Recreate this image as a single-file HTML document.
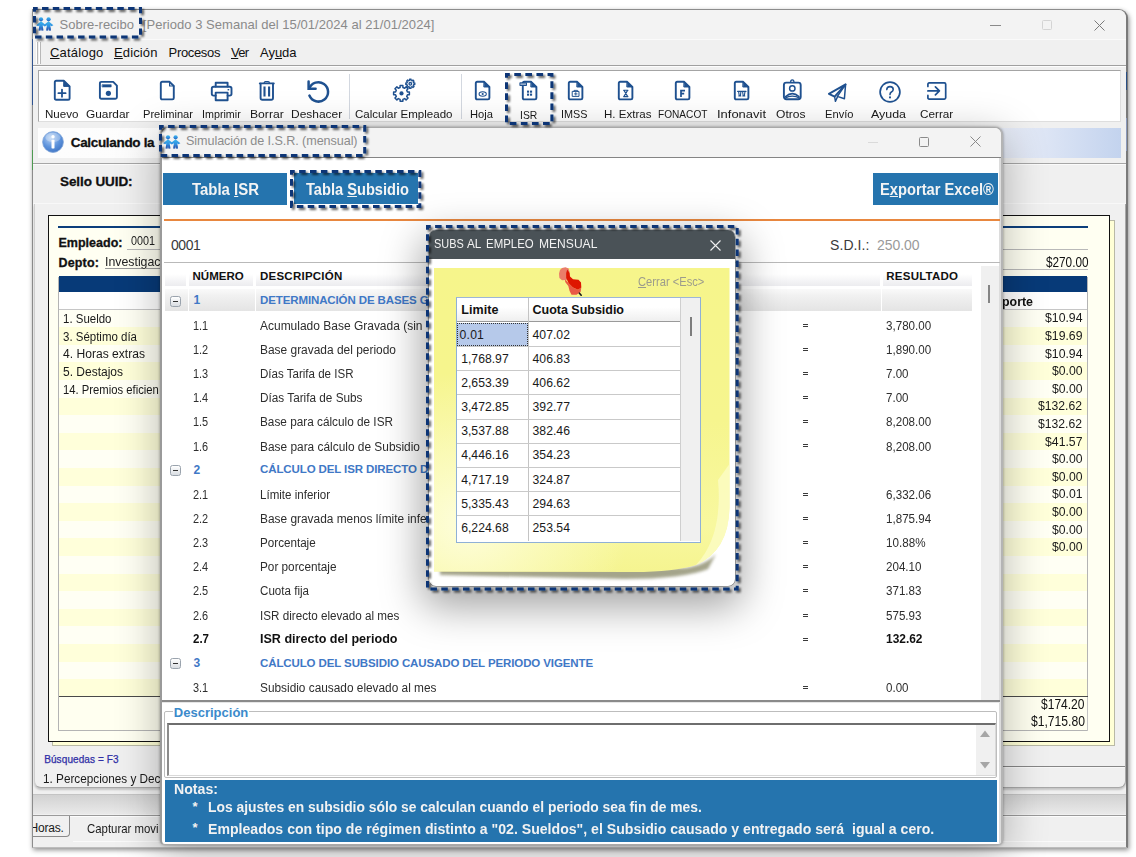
<!DOCTYPE html>
<html><head><meta charset="utf-8"><title>Sobre-recibo</title>
<style>
*{box-sizing:border-box;margin:0;padding:0}
html,body{width:1136px;height:857px;overflow:hidden;background:#fff;font-family:"Liberation Sans",sans-serif}
.a{position:absolute}
.t{position:absolute;white-space:pre}
u{text-decoration:underline;text-underline-offset:1px}
.dash{position:absolute;border:3px dashed #0b3878;filter:drop-shadow(2px 2px 1.5px rgba(0,0,0,.5))}
svg{position:absolute;overflow:visible}
</style></head><body>
<div class="a" style="left:32px;top:9px;width:1096px;height:839px;background:#f0f0f0;border:1px solid #8c8c8c;border-bottom-color:#bdbdbd;border-right:2px solid #7a7a7a;border-radius:0 9px 0 0;box-shadow:1px 2px 5px rgba(0,0,0,.45);overflow:hidden"></div>
<div class="a" style="left:33px;top:10px;width:1093px;height:30px;background:#f3f3f3;border-radius:0 8px 0 0;"></div>
<div class="a" style="left:33px;top:39px;width:1093px;height:1px;background:#fafafa;"></div>
<svg style="left:36.3px;top:17.2px" width="18" height="14" viewBox="0 0 18 14"><defs><linearGradient id="pg" x1="0" y1="0" x2="0" y2="1"><stop offset="0" stop-color="#3db6ec"/><stop offset=".55" stop-color="#2f8fe0"/><stop offset="1" stop-color="#2a5db4"/></linearGradient></defs><g fill="url(#pg)"><circle cx="5" cy="2.3" r="2.1"/><circle cx="12.6" cy="2.3" r="2.1"/><path d="M5 4.2 L0.2 8.2 L2.2 9.2 L3.3 8.3 L2.6 13.6 L4.6 13.6 L5 10.2 L5.4 13.6 L7.4 13.6 L6.7 8.3 L8.8 9.6 L10.9 8.3 L10.2 13.6 L12.2 13.6 L12.6 10.2 L13 13.6 L15 13.6 L14.3 8.3 L15.4 9.2 L17.4 8.2 L12.6 4.2 L8.8 7.2 Z"/></g><g fill="#2a5db4" opacity=".55"><path d="M2.6 13.6 L3 10.5 L7 10.5 L7.4 13.6 L5.4 13.6 L5 11.2 L4.6 13.6Z"/><path d="M10.2 13.6 L10.6 10.5 L14.6 10.5 L15 13.6 L13 13.6 L12.6 11.2 L12.2 13.6Z"/></g></svg>
<div class="t" style="left:59.50px;top:18.04px;font-size:13px;line-height:14.95px;color:#8a8a8a;letter-spacing:0.005px;">Sobre-recibo</div>
<div class="t" style="left:142.80px;top:18.04px;font-size:13px;line-height:14.95px;color:#8a8a8a;letter-spacing:0.035px;">[Periodo 3 Semanal del 15/01/2024 al 21/01/2024]</div>
<div class="a" style="left:990px;top:25px;width:11px;height:1px;background:#8a8a8a;"></div>
<div class="a" style="left:1042px;top:19.5px;width:10px;height:10px;border:1px solid #d4d4d4;border-radius:1.5px;"></div>
<svg style="left:1094px;top:19.5px" width="11" height="11" viewBox="0 0 11 11"><path d="M0.5 0.5 L10.5 10.5 M10.5 0.5 L0.5 10.5" stroke="#7a7a7a" stroke-width="1" fill="none"/></svg>
<div class="a" style="left:33px;top:40px;width:1093px;height:25px;background:#f0f0f0;"></div>
<div class="a" style="left:36px;top:42px;width:1px;height:22px;background:#fff;"></div>
<div class="a" style="left:37px;top:42px;width:1px;height:22px;background:#b8b8b8;"></div>
<div class="a" style="left:39px;top:42px;width:1px;height:22px;background:#fff;"></div>
<div class="a" style="left:40px;top:42px;width:1px;height:22px;background:#b8b8b8;"></div>
<div class="t" style="left:50.00px;top:46.04px;font-size:13px;line-height:14.95px;color:#111;letter-spacing:0.182px;"><u>C</u>atálogo</div>
<div class="t" style="left:114.00px;top:46.04px;font-size:13px;line-height:14.95px;color:#111;letter-spacing:0.123px;"><u>E</u>dición</div>
<div class="t" style="left:168.60px;top:46.04px;font-size:13px;line-height:14.95px;color:#111;letter-spacing:-0.338px;">Procesos</div>
<div class="t" style="left:231.00px;top:46.04px;font-size:13px;line-height:14.95px;color:#111;letter-spacing:-0.672px;"><u>V</u>er</div>
<div class="t" style="left:260.00px;top:46.04px;font-size:13px;line-height:14.95px;color:#111;letter-spacing:-0.028px;">Ay<u>u</u>da</div>
<div class="a" style="left:33px;top:65px;width:1093px;height:1px;background:#a0a0a0;"></div>
<div class="a" style="left:33px;top:66px;width:1093px;height:1px;background:#fdfdfd;"></div>
<div class="a" style="left:38px;top:70px;width:1083px;height:52px;background:#fff;border:1px solid #dedede;border-top-color:#a4a4a4;border-left-color:#a8a8a8;"></div>
<div class="a" style="left:349px;top:74px;width:1px;height:45px;background:#d3d8e0;"></div>
<div class="a" style="left:460.5px;top:74px;width:1px;height:45px;background:#d3d8e0;"></div>
<div class="t" style="left:44.50px;top:107.33px;font-size:11.6px;line-height:13.34px;color:#1a1a1a;transform:scaleX(0.9995);transform-origin:0 0;">Nuevo</div>
<div class="t" style="left:86.00px;top:107.33px;font-size:11.6px;line-height:13.34px;color:#1a1a1a;transform:scaleX(1.0228);transform-origin:0 0;">Guardar</div>
<div class="t" style="left:142.50px;top:107.33px;font-size:11.6px;line-height:13.34px;color:#1a1a1a;transform:scaleX(0.9581);transform-origin:0 0;">Preliminar</div>
<div class="t" style="left:202.00px;top:107.33px;font-size:11.6px;line-height:13.34px;color:#1a1a1a;transform:scaleX(0.9257);transform-origin:0 0;">Imprimir</div>
<div class="t" style="left:250.00px;top:107.33px;font-size:11.6px;line-height:13.34px;color:#1a1a1a;transform:scaleX(1.0475);transform-origin:0 0;">Borrar</div>
<div class="t" style="left:290.75px;top:107.33px;font-size:11.6px;line-height:13.34px;color:#1a1a1a;transform:scaleX(1.0327);transform-origin:0 0;">Deshacer</div>
<div class="t" style="left:355.00px;top:107.33px;font-size:11.6px;line-height:13.34px;color:#1a1a1a;transform:scaleX(0.9954);transform-origin:0 0;">Calcular Empleado</div>
<div class="t" style="left:470.00px;top:107.33px;font-size:11.6px;line-height:13.34px;color:#1a1a1a;transform:scaleX(0.9640);transform-origin:0 0;">Hoja</div>
<div class="t" style="left:519.70px;top:108.33px;font-size:11.6px;line-height:13.34px;color:#1a1a1a;transform:scaleX(0.8951);transform-origin:0 0;">ISR</div>
<div class="t" style="left:561.00px;top:107.33px;font-size:11.6px;line-height:13.34px;color:#1a1a1a;transform:scaleX(0.9344);transform-origin:0 0;">IMSS</div>
<div class="t" style="left:603.75px;top:107.33px;font-size:11.6px;line-height:13.34px;color:#1a1a1a;transform:scaleX(0.9964);transform-origin:0 0;">H. Extras</div>
<div class="t" style="left:658.00px;top:107.33px;font-size:11.6px;line-height:13.34px;color:#1a1a1a;transform:scaleX(0.8732);transform-origin:0 0;">FONACOT</div>
<div class="t" style="left:716.75px;top:107.33px;font-size:11.6px;line-height:13.34px;color:#1a1a1a;transform:scaleX(1.1180);transform-origin:0 0;">Infonavit</div>
<div class="t" style="left:776.00px;top:107.33px;font-size:11.6px;line-height:13.34px;color:#1a1a1a;transform:scaleX(1.0402);transform-origin:0 0;">Otros</div>
<div class="t" style="left:824.50px;top:107.33px;font-size:11.6px;line-height:13.34px;color:#1a1a1a;transform:scaleX(0.9610);transform-origin:0 0;">Envío</div>
<div class="t" style="left:870.75px;top:107.33px;font-size:11.6px;line-height:13.34px;color:#1a1a1a;transform:scaleX(1.0713);transform-origin:0 0;">Ayuda</div>
<div class="t" style="left:919.50px;top:107.33px;font-size:11.6px;line-height:13.34px;color:#1a1a1a;transform:scaleX(1.0119);transform-origin:0 0;">Cerrar</div>
<svg style="left:53.5px;top:79.8px" width="16.4" height="20.6" viewBox="0 0 16.4 20.6" fill="none" stroke="#1f5190" stroke-width="1.9" stroke-linejoin="round" stroke-linecap="round"><path d="M2.2 .8 H9.999999999999998 L15.599999999999998 6.3999999999999995 V18.400000000000002 Q15.599999999999998 19.8 14.2 19.8 H2.2 Q.8 19.8 .8 18.400000000000002 V2.2 Q.8 .8 2.2 .8Z"/><path d="M9.999999999999998 .8 L15.599999999999998 6.3999999999999995 H9.999999999999998Z" fill="#1f5190" stroke-width="1"/><path d="M8 9.6 V16.8 M4.4 13.2 H11.6" stroke-width="1.8"/></svg>
<svg style="left:99px;top:81.2px" width="18.8" height="18.6" viewBox="0 0 18.8 18.6" fill="none" stroke="#1f5190" stroke-width="1.9" stroke-linejoin="round" stroke-linecap="round"><path d="M2.4 .9 H14.2 L17.9 4.6 V16.2 Q17.9 17.7 16.4 17.7 H2.4 Q.9 17.7 .9 16.2 V2.4 Q.9 .9 2.4 .9Z"/><rect x="3.4" y="3.7" width="8.8" height="2.3" fill="#1f5190" stroke-width=".6"/><circle cx="9.4" cy="12.3" r="2.6" fill="#1f5190" stroke="none"/></svg>
<svg style="left:160px;top:81.3px" width="14.6" height="19.2" viewBox="0 0 14.6 19.2" fill="none" stroke="#1f5190" stroke-width="1.9" stroke-linejoin="round" stroke-linecap="round"><path d="M2.2 .8 H9.6 L13.8 5 V17 Q13.8 18.4 12.4 18.4 H2.2 Q.8 18.4 .8 17 V2.2 Q.8 .8 2.2 .8Z"/><path d="M9.6 .8 V5 H13.8" stroke-width="1.2"/></svg>
<svg style="left:210.6px;top:82px" width="21.3" height="19" viewBox="0 0 21.3 19" fill="none" stroke="#1f5190" stroke-width="1.9" stroke-linejoin="round" stroke-linecap="round"><path d="M4.7 4.6 V.8 H16.6 V4.6" /><path d="M4.7 13.6 H2.6 Q.8 13.6 .8 11.8 V6.6 Q.8 4.8 2.6 4.8 H18.7 Q20.5 4.8 20.5 6.6 V11.8 Q20.5 13.6 18.7 13.6 H16.6"/><path d="M4.7 10.6 H16.6 V18.2 H4.7Z"/><rect x="16.6" y="7" width="1.6" height="1.4" fill="#1f5190" stroke="none"/></svg>
<svg style="left:259.4px;top:80.6px" width="15.6" height="19.6" viewBox="0 0 15.6 19.6" fill="none" stroke="#1f5190" stroke-width="1.9" stroke-linejoin="round" stroke-linecap="round"><path d="M.8 2.4 H14.8"/><path d="M5.2 2.2 Q5.2 .7 6.4 .7 H9.2 Q10.4 .7 10.4 2.2" stroke-width="1.3"/><path d="M1.6 2.6 V17 Q1.6 18.8 3.4 18.8 H12.2 Q14 18.8 14 17 V2.6"/><path d="M5.5 5.6 V15.4 M10.1 5.6 V15.4" stroke-width="2.1" stroke-linecap="butt"/></svg>
<svg style="left:306px;top:79px" width="24" height="24" viewBox="0 0 24 24" fill="none" stroke="#1f5190" stroke-width="1.9" stroke-linejoin="round" stroke-linecap="round"><path d="M3.4 16.6 A9.7 9.7 0 1 0 3.2 9.7" stroke-width="2.5"/><path d="M2.6 2.6 V9.7 H9.6" stroke-width="2.5" stroke-linejoin="miter"/></svg>
<svg style="left:392px;top:78px" width="24" height="26" viewBox="0 0 24 26" fill="none" stroke="#1f5190" stroke-width="1.9" stroke-linejoin="round" stroke-linecap="round"><path d="M17.38 14.02 L17.38 16.78 L15.43 16.82 L14.70 18.59 L16.05 20.00 L14.10 21.95 L12.69 20.60 L10.92 21.33 L10.88 23.28 L8.12 23.28 L8.08 21.33 L6.31 20.60 L4.90 21.95 L2.95 20.00 L4.30 18.59 L3.57 16.82 L1.62 16.78 L1.62 14.02 L3.57 13.98 L4.30 12.21 L2.95 10.80 L4.90 8.85 L6.31 10.20 L8.08 9.47 L8.12 7.52 L10.88 7.52 L10.92 9.47 L12.69 10.20 L14.10 8.85 L16.05 10.80 L14.70 12.21 L15.43 13.98Z" stroke-width="1.5"/><circle cx="9.5" cy="15.4" r="2.1" fill="#1f5190" stroke="none"/><path d="M22.83 5.01 L22.83 6.59 L21.61 6.59 L21.20 7.58 L22.06 8.45 L20.95 9.56 L20.08 8.70 L19.09 9.11 L19.09 10.33 L17.51 10.33 L17.51 9.11 L16.52 8.70 L15.65 9.56 L14.54 8.45 L15.40 7.58 L14.99 6.59 L13.77 6.59 L13.77 5.01 L14.99 5.01 L15.40 4.02 L14.54 3.15 L15.65 2.04 L16.52 2.90 L17.51 2.49 L17.51 1.27 L19.09 1.27 L19.09 2.49 L20.08 2.90 L20.95 2.04 L22.06 3.15 L21.20 4.02 L21.61 5.01Z" stroke-width="1.3"/><circle cx="18.3" cy="5.8" r="1.3" stroke-width="1.3"/></svg>
<svg style="left:474.6px;top:81px" width="15.2" height="19.2" viewBox="0 0 15.2 19.2" fill="none" stroke="#1f5190" stroke-width="1.9" stroke-linejoin="round" stroke-linecap="round"><path d="M2.2 .8 H9.2 L14.399999999999999 6.0 V17.0 Q14.399999999999999 18.4 13.0 18.4 H2.2 Q.8 18.4 .8 17.0 V2.2 Q.8 .8 2.2 .8Z"/><path d="M9.2 .8 L14.399999999999999 6.0 H9.2Z" fill="#1f5190" stroke-width="1"/><ellipse cx="7.7" cy="13" rx="3.6" ry="2.2" stroke-width="1.1"/><circle cx="7.7" cy="13" r="1.1" fill="#1f5190" stroke="none"/></svg>
<svg style="left:522.0px;top:81px" width="15.2" height="19.2" viewBox="0 0 15.2 19.2" fill="none" stroke="#1f5190" stroke-width="1.9" stroke-linejoin="round" stroke-linecap="round"><path d="M2.2 .8 H9.2 L14.399999999999999 6.0 V17.0 Q14.399999999999999 18.4 13.0 18.4 H2.2 Q.8 18.4 .8 17.0 V2.2 Q.8 .8 2.2 .8Z"/><path d="M9.2 .8 L14.399999999999999 6.0 H9.2Z" fill="#1f5190" stroke-width="1"/><rect x="5" y="9.6" width="2.1" height="2.1" fill="#1f5190" stroke="none"/><rect x="8" y="9.6" width="2.1" height="2.1" fill="#1f5190" stroke="none"/><rect x="5" y="12.6" width="2.1" height="2.1" fill="#1f5190" stroke="none"/><rect x="8" y="12.6" width="2.1" height="2.1" fill="#1f5190" stroke="none"/><rect x="-2.6" y="1.2" width="7.6" height="3.8" rx=".8" fill="#1f5190" stroke="none"/><path d="M-1.2 3.1 H3.6" stroke="#fff" stroke-width=".9"/></svg>
<svg style="left:567.8px;top:81px" width="15.2" height="19.2" viewBox="0 0 15.2 19.2" fill="none" stroke="#1f5190" stroke-width="1.9" stroke-linejoin="round" stroke-linecap="round"><path d="M2.2 .8 H9.2 L14.399999999999999 6.0 V17.0 Q14.399999999999999 18.4 13.0 18.4 H2.2 Q.8 18.4 .8 17.0 V2.2 Q.8 .8 2.2 .8Z"/><path d="M9.2 .8 L14.399999999999999 6.0 H9.2Z" fill="#1f5190" stroke-width="1"/><rect x="4.6" y="10.4" width="6.4" height="5" stroke-width="1"/><path d="M6 10.4 V9.4 H9.6 V10.4 M7.8 11.6 V14.2 M6.5 12.9 H9.1" stroke-width=".9"/></svg>
<svg style="left:618.4px;top:81px" width="15.2" height="19.2" viewBox="0 0 15.2 19.2" fill="none" stroke="#1f5190" stroke-width="1.9" stroke-linejoin="round" stroke-linecap="round"><path d="M2.2 .8 H9.2 L14.399999999999999 6.0 V17.0 Q14.399999999999999 18.4 13.0 18.4 H2.2 Q.8 18.4 .8 17.0 V2.2 Q.8 .8 2.2 .8Z"/><path d="M9.2 .8 L14.399999999999999 6.0 H9.2Z" fill="#1f5190" stroke-width="1"/><path d="M5.6 9.2 H10 M5.6 15.6 H10 M6 9.4 L9.6 15.4 M9.6 9.4 L6 15.4" stroke-width="1.1"/></svg>
<svg style="left:674.6px;top:81px" width="15.2" height="19.2" viewBox="0 0 15.2 19.2" fill="none" stroke="#1f5190" stroke-width="1.9" stroke-linejoin="round" stroke-linecap="round"><path d="M2.2 .8 H9.2 L14.399999999999999 6.0 V17.0 Q14.399999999999999 18.4 13.0 18.4 H2.2 Q.8 18.4 .8 17.0 V2.2 Q.8 .8 2.2 .8Z"/><path d="M9.2 .8 L14.399999999999999 6.0 H9.2Z" fill="#1f5190" stroke-width="1"/><path d="M6 16 V9.6 H10 M6 12.7 H9.2" stroke-width="1.7" stroke-linecap="butt" stroke-linejoin="miter"/></svg>
<svg style="left:733.7px;top:81px" width="15.2" height="19.2" viewBox="0 0 15.2 19.2" fill="none" stroke="#1f5190" stroke-width="1.9" stroke-linejoin="round" stroke-linecap="round"><path d="M2.2 .8 H9.2 L14.399999999999999 6.0 V17.0 Q14.399999999999999 18.4 13.0 18.4 H2.2 Q.8 18.4 .8 17.0 V2.2 Q.8 .8 2.2 .8Z"/><path d="M9.2 .8 L14.399999999999999 6.0 H9.2Z" fill="#1f5190" stroke-width="1"/><path d="M3.6 10.4 H12 M4.6 10.6 L5.3 14.8 M6.9 10.6 L6.4 14.8 M8.6 10.6 L9.2 14.8 M11 10.6 L10.3 14.8 M4.8 14.9 H6.8 M8.8 14.9 H10.8" stroke-width="1.1"/></svg>
<svg style="left:782.7px;top:78.6px" width="18.6" height="21.4" viewBox="0 0 18.6 21.4" fill="none" stroke="#1f5190" stroke-width="1.9" stroke-linejoin="round" stroke-linecap="round"><rect x=".9" y="3.6" width="16.8" height="16.6" rx="2.4"/><path d="M7.6 3.4 Q7.6 .8 9.3 .8 Q11 .8 11 3.4" stroke-width="1.2"/><circle cx="9.3" cy="9.4" r="2.7" stroke-width="1.5"/><path d="M2.6 17.6 Q9.3 11.6 16 17.6" stroke-width="1.5"/><path d="M1.6 19.4 Q9.3 15 17 19.4" stroke-width="1.2"/></svg>
<svg style="left:828px;top:82.5px" width="19" height="20" viewBox="0 0 19 20" fill="none" stroke="#1f5190" stroke-width="1.9" stroke-linejoin="round" stroke-linecap="round"><path d="M17.6 1.4 L.9 10.8 L6.6 13.6 Z"/><path d="M17.6 1.4 L16.4 15.8 L9.4 13.4 Z" stroke-width="1.5"/><path d="M6.6 13.6 L7.4 18.4 L9.6 13.6" stroke-width="1.4"/></svg>
<svg style="left:878.6px;top:80.5px" width="22" height="22" viewBox="0 0 22 22" fill="none" stroke="#1f5190" stroke-width="1.9" stroke-linejoin="round" stroke-linecap="round"><circle cx="11" cy="11" r="9.9" stroke-width="1.7"/><path d="M7.8 8.6 Q7.8 5.6 11 5.6 Q14.2 5.6 14.2 8.4 Q14.2 10 12.4 11 Q11 11.8 11 13.6" stroke-width="1.6"/><circle cx="11" cy="16.4" r="1.05" fill="#1f5190" stroke="none"/></svg>
<svg style="left:927.4px;top:82px" width="19.6" height="18" viewBox="0 0 19.6 18" fill="none" stroke="#1f5190" stroke-width="1.9" stroke-linejoin="round" stroke-linecap="round"><path d="M.9 4.4 V2.2 Q.9 .9 2.2 .9 H17.4 Q18.7 .9 18.7 2.2 V15.8 Q18.7 17.1 17.4 17.1 H2.2 Q.9 17.1 .9 15.8 V13.4" stroke-width="1.7"/><path d="M.9 8.9 H12.2 M8.4 4.9 L12.4 8.9 L8.4 12.9" stroke-width="1.7"/></svg>
<div class="a" style="left:38px;top:128px;width:1083px;height:30px;background:linear-gradient(90deg,#fdfdfd 0%,#fbfbfb 70%,#e9edf7 88%,#dde5f5 93%,#c3d3ee 100%);"></div>
<svg style="left:41.5px;top:131px" width="22" height="22" viewBox="0 0 22 22"><defs><radialGradient id="ig" cx=".4" cy=".3" r=".8"><stop offset="0" stop-color="#b9d3f4"/><stop offset=".55" stop-color="#5d93dc"/><stop offset="1" stop-color="#3a6fc0"/></radialGradient></defs><circle cx="11" cy="11" r="10.4" fill="url(#ig)" stroke="#7fa4d8" stroke-width=".8"/><ellipse cx="11" cy="6.4" rx="7.6" ry="4.6" fill="#fff" opacity=".28"/><circle cx="11" cy="5.8" r="1.7" fill="#fff"/><rect x="9.5" y="8.8" width="3" height="8.6" rx=".6" fill="#fff"/></svg>
<div class="t" style="left:70.75px;top:134.58px;font-size:13.5px;line-height:15.52px;color:#111;font-weight:bold;letter-spacing:-0.329px;-webkit-text-stroke:.3px #111;">Calculando la</div>
<div class="a" style="left:33px;top:163px;width:1093px;height:1px;background:#a6a6a6;"></div>
<div class="a" style="left:33px;top:164px;width:1093px;height:1px;background:#fbfbfb;"></div>
<div class="t" style="left:60.00px;top:173.58px;font-size:13.5px;line-height:15.52px;color:#111;font-weight:bold;letter-spacing:-0.092px;-webkit-text-stroke:.3px #111;">Sello UUID:</div>
<div class="a" style="left:33px;top:203px;width:1093px;height:1px;background:#f8f8f8;"></div>
<div class="a" style="left:33.5px;top:204px;width:1092.5px;height:584px;background:#f0f0f0;border:1px solid #a8a8a8;border-left-color:#cfcfcf;border-top:none;border-radius:0 0 7px 7px;box-shadow:0 2px 2px rgba(0,0,0,.18)"></div>
<div class="a" style="left:161px;top:765.6px;width:964px;height:1.5px;background:#868686;"></div>
<div class="a" style="left:161px;top:767.1px;width:964px;height:1px;background:#f8f8f8;"></div>
<div class="a" style="left:52px;top:220px;width:1062.5px;height:526px;background:#ffffd6;border:1px solid #b9b9a6;"></div>
<div class="a" style="left:47.5px;top:214.8px;width:1062.5px;height:527.2px;background:#fffff2;border:1px solid #111;"></div>
<div class="a" style="left:58px;top:226px;width:1030px;height:2px;background:#0d3f7c;"></div>
<div class="t" style="left:58.50px;top:235.50px;font-size:12.5px;line-height:14.37px;color:#111;font-weight:bold;letter-spacing:0.01px;-webkit-text-stroke:.3px #111;">Empleado:</div>
<div class="t" style="left:131.00px;top:234.04px;font-size:13px;line-height:14.95px;color:#222;transform:scaleX(0.8298);transform-origin:0 0;">0001</div>
<div class="a" style="left:127px;top:249px;width:961px;height:1px;background:#b9b9b9;"></div>
<div class="t" style="left:58.50px;top:255.50px;font-size:12.5px;line-height:14.37px;color:#111;font-weight:bold;letter-spacing:0.154px;-webkit-text-stroke:.3px #111;">Depto:</div>
<div class="t" style="left:104.50px;top:255.04px;font-size:13px;line-height:14.95px;color:#222;transform:scaleX(0.9480);transform-origin:0 0;text-decoration:underline;text-decoration-color:#999;text-decoration-thickness:1px;text-underline-offset:1.5px;">Investigac</div>
<div class="t" style="left:1045.70px;top:255.30px;font-size:13.8px;line-height:15.87px;color:#111;transform:scaleX(0.8521);transform-origin:0 0;">$270.00</div>
<div class="a" style="left:1002px;top:269px;width:86px;height:1px;background:#b9b9b9;"></div>
<div class="a" style="left:58px;top:276.5px;width:1030px;height:454.5px;background:#fffff2;border:1px solid #b4b4b4;"></div>
<div class="a" style="left:58.5px;top:276.4px;width:1028.5px;height:15.4px;background:#073a78;"></div>
<div class="a" style="left:58.5px;top:291.8px;width:1028.5px;height:17px;background:#fff;"></div>
<div class="a" style="left:58.5px;top:308.6px;width:1028.5px;height:1px;background:#c6c6c6;"></div>
<div class="a" style="left:58.5px;top:309.6px;width:1028.5px;height:17.650000000000002px;background:#fffff4;"></div>
<div class="a" style="left:58.5px;top:327.2px;width:1028.5px;height:17.650000000000002px;background:#ffffda;"></div>
<div class="a" style="left:58.5px;top:344.8px;width:1028.5px;height:17.650000000000002px;background:#fffff4;"></div>
<div class="a" style="left:58.5px;top:362.4px;width:1028.5px;height:17.650000000000002px;background:#ffffda;"></div>
<div class="a" style="left:58.5px;top:380.0px;width:1028.5px;height:17.650000000000002px;background:#fffff4;"></div>
<div class="a" style="left:58.5px;top:397.6px;width:1028.5px;height:17.650000000000002px;background:#ffffda;"></div>
<div class="a" style="left:58.5px;top:415.2px;width:1028.5px;height:17.650000000000002px;background:#fffff4;"></div>
<div class="a" style="left:58.5px;top:432.8px;width:1028.5px;height:17.650000000000002px;background:#ffffda;"></div>
<div class="a" style="left:58.5px;top:450.4px;width:1028.5px;height:17.650000000000002px;background:#fffff4;"></div>
<div class="a" style="left:58.5px;top:468.0px;width:1028.5px;height:17.650000000000002px;background:#ffffda;"></div>
<div class="a" style="left:58.5px;top:485.6px;width:1028.5px;height:17.650000000000002px;background:#fffff4;"></div>
<div class="a" style="left:58.5px;top:503.2px;width:1028.5px;height:17.650000000000002px;background:#ffffda;"></div>
<div class="a" style="left:58.5px;top:520.8px;width:1028.5px;height:17.650000000000002px;background:#fffff4;"></div>
<div class="a" style="left:58.5px;top:538.4px;width:1028.5px;height:17.650000000000002px;background:#ffffda;"></div>
<div class="a" style="left:58.5px;top:556.0px;width:1028.5px;height:17.650000000000002px;background:#fffff4;"></div>
<div class="a" style="left:58.5px;top:573.6px;width:1028.5px;height:17.650000000000002px;background:#ffffda;"></div>
<div class="a" style="left:58.5px;top:591.2px;width:1028.5px;height:17.650000000000002px;background:#fffff4;"></div>
<div class="a" style="left:58.5px;top:608.8px;width:1028.5px;height:17.650000000000002px;background:#ffffda;"></div>
<div class="a" style="left:58.5px;top:626.4px;width:1028.5px;height:17.650000000000002px;background:#fffff4;"></div>
<div class="a" style="left:58.5px;top:644.0px;width:1028.5px;height:17.650000000000002px;background:#ffffda;"></div>
<div class="a" style="left:58.5px;top:661.6px;width:1028.5px;height:17.650000000000002px;background:#fffff4;"></div>
<div class="a" style="left:58.5px;top:679.2px;width:1028.5px;height:17.650000000000002px;background:#ffffda;"></div>
<div class="a" style="left:58.5px;top:696.4px;width:1029px;height:1px;background:#4a4a4a;"></div>
<div class="a" style="left:58.5px;top:697.4px;width:1028.5px;height:33px;background:#fffff0;"></div>
<div class="a" style="left:1087px;top:697px;width:1px;height:34px;background:#c4c4c4;"></div>
<div class="t" style="left:1002.30px;top:294.59px;font-size:12.4px;line-height:14.26px;color:#111;font-weight:bold;transform:scaleX(1.0005);transform-origin:0 0;">porte</div>
<div class="t" style="left:63.00px;top:311.69px;font-size:12.3px;line-height:14.14px;color:#1a1a1a;transform:scaleX(0.9333);transform-origin:0 0;">1. Sueldo</div>
<div class="t" style="left:63.00px;top:329.69px;font-size:12.3px;line-height:14.14px;color:#1a1a1a;transform:scaleX(0.9332);transform-origin:0 0;">3. Séptimo día</div>
<div class="t" style="left:63.00px;top:346.69px;font-size:12.3px;line-height:14.14px;color:#1a1a1a;transform:scaleX(0.9833);transform-origin:0 0;">4. Horas extras</div>
<div class="t" style="left:63.00px;top:364.69px;font-size:12.3px;line-height:14.14px;color:#1a1a1a;transform:scaleX(0.9754);transform-origin:0 0;">5. Destajos</div>
<div class="t" style="left:63.00px;top:382.69px;font-size:12.3px;line-height:14.14px;color:#1a1a1a;transform:scaleX(0.9161);transform-origin:0 0;">14. Premios eficien</div>
<div class="t" style="left:1044.80px;top:311.32px;font-size:12.7px;line-height:14.6px;color:#1a1a1a;transform:scaleX(0.9662);transform-origin:0 0;">$10.94</div>
<div class="t" style="left:1044.80px;top:329.32px;font-size:12.7px;line-height:14.6px;color:#1a1a1a;transform:scaleX(0.9662);transform-origin:0 0;">$19.69</div>
<div class="t" style="left:1044.80px;top:347.32px;font-size:12.7px;line-height:14.6px;color:#1a1a1a;transform:scaleX(0.9662);transform-origin:0 0;">$10.94</div>
<div class="t" style="left:1051.80px;top:364.32px;font-size:12.7px;line-height:14.6px;color:#1a1a1a;transform:scaleX(0.9606);transform-origin:0 0;">$0.00</div>
<div class="t" style="left:1051.80px;top:382.32px;font-size:12.7px;line-height:14.6px;color:#1a1a1a;transform:scaleX(0.9606);transform-origin:0 0;">$0.00</div>
<div class="t" style="left:1038.30px;top:399.32px;font-size:12.7px;line-height:14.6px;color:#1a1a1a;transform:scaleX(0.9591);transform-origin:0 0;">$132.62</div>
<div class="t" style="left:1038.30px;top:417.32px;font-size:12.7px;line-height:14.6px;color:#1a1a1a;transform:scaleX(0.9591);transform-origin:0 0;">$132.62</div>
<div class="t" style="left:1044.80px;top:435.32px;font-size:12.7px;line-height:14.6px;color:#1a1a1a;transform:scaleX(0.9662);transform-origin:0 0;">$41.57</div>
<div class="t" style="left:1051.80px;top:452.32px;font-size:12.7px;line-height:14.6px;color:#1a1a1a;transform:scaleX(0.9606);transform-origin:0 0;">$0.00</div>
<div class="t" style="left:1051.80px;top:470.32px;font-size:12.7px;line-height:14.6px;color:#1a1a1a;transform:scaleX(0.9606);transform-origin:0 0;">$0.00</div>
<div class="t" style="left:1051.80px;top:487.32px;font-size:12.7px;line-height:14.6px;color:#1a1a1a;transform:scaleX(0.9606);transform-origin:0 0;">$0.01</div>
<div class="t" style="left:1051.80px;top:505.32px;font-size:12.7px;line-height:14.6px;color:#1a1a1a;transform:scaleX(0.9606);transform-origin:0 0;">$0.00</div>
<div class="t" style="left:1051.80px;top:523.32px;font-size:12.7px;line-height:14.6px;color:#1a1a1a;transform:scaleX(0.9606);transform-origin:0 0;">$0.00</div>
<div class="t" style="left:1051.80px;top:540.32px;font-size:12.7px;line-height:14.6px;color:#1a1a1a;transform:scaleX(0.9606);transform-origin:0 0;">$0.00</div>
<div class="t" style="left:1041.20px;top:697.30px;font-size:13.8px;line-height:15.87px;color:#111;transform:scaleX(0.8722);transform-origin:0 0;">$174.20</div>
<div class="t" style="left:1030.70px;top:714.30px;font-size:13.8px;line-height:15.87px;color:#111;transform:scaleX(0.8796);transform-origin:0 0;">$1,715.80</div>
<div class="t" style="left:44.20px;top:753.80px;font-size:10px;line-height:11.5px;color:#2f2fa6;letter-spacing:0.099px;-webkit-text-stroke:.25px #2f2fa6;">Búsquedas = F3</div>
<div class="t" style="left:42.50px;top:772.22px;font-size:12.8px;line-height:14.72px;color:#1a1a1a;transform:scaleX(0.9176);transform-origin:0 0;">1. Percepciones y Dec</div>
<div class="a" style="left:33px;top:795px;width:1093px;height:19px;background:linear-gradient(#d2d2d2,#e9e9e9);"></div>
<div class="a" style="left:33px;top:794px;width:1093px;height:1px;background:#c4c4c4;"></div>
<div class="a" style="left:33px;top:815px;width:1093px;height:1px;background:#9a9a9a;"></div>
<div class="a" style="left:33px;top:816px;width:1093px;height:1px;background:#fdfdfd;"></div>
<div class="a" style="left:33px;top:816px;width:40px;height:24px;overflow:hidden"><div class="a" style="left:-8px;top:0;width:44.5px;height:20.5px;border:1px solid #8a8a8a;border-top:none;border-radius:0 0 4px 4px;background:#f0f0f0"></div><div class="t" style="left:-3.5px;top:5px;font-size:12px;line-height:14px;color:#1a1a1a;letter-spacing:-.2px">Horas.</div></div>
<div class="a" style="left:73px;top:841px;width:1053px;height:1px;background:#fafafa;"></div>
<div class="t" style="left:87.00px;top:822.22px;font-size:12.8px;line-height:14.72px;color:#1a1a1a;transform:scaleX(0.8896);transform-origin:0 0;">Capturar movi</div>
<div class="a" style="left:1125.6px;top:71.5px;width:1.6px;height:18.5px;background:#2a4f85;"></div>
<div class="a" style="left:1125.6px;top:118px;width:1.6px;height:33px;background:#8a98ba;"></div>
<div class="a" style="left:32px;top:39px;width:1px;height:66px;background:#2f5390;"></div>
<div class="a" style="left:32px;top:150px;width:1px;height:20px;background:#4f9a52;"></div>
<div class="a" style="left:159.5px;top:127px;width:843px;height:718px;background:#fff;border:1px solid #a9a9a9;border-left:2px solid #9a9a9a;border-right:2px solid #b4b4b4;border-radius:8px 8px 5px 5px;box-shadow:0 0 3px rgba(0,0,0,.4),0 10px 42px 3px rgba(0,0,0,.26);overflow:hidden"><div class="a" style="left:0;top:0;width:843px;height:28.5px;background:#f3f3f3"></div><div class="a" style="left:0;top:28.5px;width:843px;height:1.6px;background:#848484"></div><div class="a" style="right:0;top:30px;width:1.5px;height:690px;background:#dcdcdc"></div></div>
<svg style="left:163.3px;top:134.5px" width="18" height="14" viewBox="0 0 18 14"><defs><linearGradient id="pg" x1="0" y1="0" x2="0" y2="1"><stop offset="0" stop-color="#3db6ec"/><stop offset=".55" stop-color="#2f8fe0"/><stop offset="1" stop-color="#2a5db4"/></linearGradient></defs><g fill="url(#pg)"><circle cx="5" cy="2.3" r="2.1"/><circle cx="12.6" cy="2.3" r="2.1"/><path d="M5 4.2 L0.2 8.2 L2.2 9.2 L3.3 8.3 L2.6 13.6 L4.6 13.6 L5 10.2 L5.4 13.6 L7.4 13.6 L6.7 8.3 L8.8 9.6 L10.9 8.3 L10.2 13.6 L12.2 13.6 L12.6 10.2 L13 13.6 L15 13.6 L14.3 8.3 L15.4 9.2 L17.4 8.2 L12.6 4.2 L8.8 7.2 Z"/></g><g fill="#2a5db4" opacity=".55"><path d="M2.6 13.6 L3 10.5 L7 10.5 L7.4 13.6 L5.4 13.6 L5 11.2 L4.6 13.6Z"/><path d="M10.2 13.6 L10.6 10.5 L14.6 10.5 L15 13.6 L13 13.6 L12.6 11.2 L12.2 13.6Z"/></g></svg>
<div class="t" style="left:186.00px;top:134.41px;font-size:12.6px;line-height:14.49px;color:#8c8c8c;letter-spacing:-0.07px;">Simulación de I.S.R. (mensual)</div>
<div class="a" style="left:868px;top:141.5px;width:10px;height:1px;background:#dadada;"></div>
<div class="a" style="left:918.5px;top:137px;width:10px;height:10px;border:1px solid #8a8a8a;border-radius:1.5px;"></div>
<svg style="left:969.8px;top:136.3px" width="11" height="11" viewBox="0 0 11 11"><path d="M0.5 0.5 L10.5 10.5 M10.5 0.5 L0.5 10.5" stroke="#8a8a8a" stroke-width="1" fill="none"/></svg>
<div class="a" style="left:163px;top:173.2px;width:124.1px;height:31.5px;background:#2574ae;"></div>
<div class="a" style="left:293.7px;top:173.2px;width:124.3px;height:31.3px;background:#2574ae;"></div>
<div class="a" style="left:873.4px;top:173.2px;width:125px;height:31.5px;background:#2574ae;"></div>
<div class="t" style="left:192.00px;top:180.64px;font-size:15.6px;line-height:17.94px;color:#f4f4f4;font-weight:bold;transform:scaleX(0.9584);transform-origin:0 0;">Tabla <u>I</u>SR</div>
<div class="t" style="left:306.40px;top:180.64px;font-size:15.6px;line-height:17.94px;color:#f4f4f4;font-weight:bold;transform:scaleX(0.9385);transform-origin:0 0;">Tabla <u>S</u>ubsidio</div>
<div class="t" style="left:879.50px;top:180.64px;font-size:15.6px;line-height:17.94px;color:#f4f4f4;font-weight:bold;transform:scaleX(0.9428);transform-origin:0 0;">E<u>x</u>portar Excel®</div>
<div class="a" style="left:163.5px;top:219px;width:836.5px;height:2px;background:#e8873f;"></div>
<div class="t" style="left:171.00px;top:237.12px;font-size:14px;line-height:16.1px;color:#3a3a3a;letter-spacing:-0.414px;">0001</div>
<div class="t" style="left:830.00px;top:237.12px;font-size:14px;line-height:16.1px;color:#3a3a3a;letter-spacing:0.085px;">S.D.I.:</div>
<div class="t" style="left:877.00px;top:237.12px;font-size:14px;line-height:16.1px;color:#9a9a9a;letter-spacing:-0.055px;">250.00</div>
<div class="a" style="left:163.5px;top:261.5px;width:836px;height:1.4px;background:#b9b9b9;"></div>
<div class="a" style="left:980.8px;top:266px;width:18.4px;height:435px;background:#f0f0f0;"></div>
<div class="a" style="left:988.3px;top:284.5px;width:1.6px;height:18px;background:#858585;"></div>
<div class="a" style="left:165px;top:270px;width:21.3px;height:16px;background:linear-gradient(#fff 25%,#ececef 100%);"></div>
<div class="a" style="left:188.8px;top:270px;width:64.5px;height:16px;background:linear-gradient(#fff 25%,#ececef 100%);"></div>
<div class="a" style="left:256.3px;top:270px;width:623.3px;height:16px;background:linear-gradient(#fff 25%,#ececef 100%);"></div>
<div class="a" style="left:883.2px;top:270px;width:89.3px;height:16px;background:linear-gradient(#fff 25%,#ececef 100%);"></div>
<div class="t" style="left:192.50px;top:270.43px;font-size:11.5px;line-height:13.22px;color:#111;font-weight:bold;letter-spacing:0.029px;">NÚMERO</div>
<div class="t" style="left:260.00px;top:270.43px;font-size:11.5px;line-height:13.22px;color:#111;font-weight:bold;letter-spacing:0.239px;">DESCRIPCIÓN</div>
<div class="t" style="left:886.30px;top:270.43px;font-size:11.5px;line-height:13.22px;color:#111;font-weight:bold;letter-spacing:0.238px;">RESULTADO</div>
<div class="a" style="left:165px;top:289.4px;width:22.6px;height:22px;background:linear-gradient(#fafafa,#f1f1f1 30%,#e4e4e4);"></div>
<div class="a" style="left:189.3px;top:289.4px;width:65.5px;height:22px;background:linear-gradient(#fafafa,#f1f1f1 30%,#e4e4e4);"></div>
<div class="a" style="left:256.4px;top:289.4px;width:624.2px;height:22px;background:linear-gradient(#fafafa,#f1f1f1 30%,#e4e4e4);"></div>
<div class="a" style="left:882.4px;top:289.4px;width:90.1px;height:22px;background:linear-gradient(#fafafa,#f1f1f1 30%,#e4e4e4);"></div>
<div class="a" style="left:170px;top:296px;width:11px;height:11px;border:1px solid #9aa3ad;border-radius:2.5px;background:linear-gradient(#fff,#d9dde2)"><div class="a" style="left:2px;top:4px;width:5px;height:1px;background:#333"></div></div>
<div class="t" style="left:193.60px;top:293.96px;font-size:12px;line-height:13.8px;color:#3f78c6;font-weight:bold;">1</div>
<div class="t" style="left:260.00px;top:294.43px;font-size:11.5px;line-height:13.22px;color:#3f78c6;font-weight:bold;letter-spacing:-0.113px;">DETERMINACIÓN DE BASES GRAVADAS</div>
<div class="t" style="left:193.00px;top:318.69px;font-size:12.3px;line-height:14.14px;color:#2e2e2e;transform:scaleX(0.8884);transform-origin:0 0;">1.1</div>
<div class="t" style="left:260.00px;top:318.69px;font-size:12.3px;line-height:14.14px;color:#2e2e2e;transform:scaleX(0.9743);transform-origin:0 0;">Acumulado Base Gravada (sin</div>
<div class="a" style="left:803px;top:324px;width:5px;height:1px;background:#3a3a3a;"></div>
<div class="a" style="left:803px;top:326px;width:5px;height:1px;background:#3a3a3a;"></div>
<div class="t" style="left:886.30px;top:318.69px;font-size:12.3px;line-height:14.14px;color:#2e2e2e;transform:scaleX(0.9441);transform-origin:0 0;">3,780.00</div>
<div class="t" style="left:193.00px;top:342.69px;font-size:12.3px;line-height:14.14px;color:#2e2e2e;transform:scaleX(0.8884);transform-origin:0 0;">1.2</div>
<div class="t" style="left:260.00px;top:342.69px;font-size:12.3px;line-height:14.14px;color:#2e2e2e;transform:scaleX(0.9703);transform-origin:0 0;">Base gravada del periodo</div>
<div class="a" style="left:803px;top:348px;width:5px;height:1px;background:#3a3a3a;"></div>
<div class="a" style="left:803px;top:350px;width:5px;height:1px;background:#3a3a3a;"></div>
<div class="t" style="left:886.30px;top:342.69px;font-size:12.3px;line-height:14.14px;color:#2e2e2e;transform:scaleX(0.9441);transform-origin:0 0;">1,890.00</div>
<div class="t" style="left:193.00px;top:366.69px;font-size:12.3px;line-height:14.14px;color:#2e2e2e;transform:scaleX(0.8884);transform-origin:0 0;">1.3</div>
<div class="t" style="left:260.00px;top:366.69px;font-size:12.3px;line-height:14.14px;color:#2e2e2e;transform:scaleX(0.9391);transform-origin:0 0;">Días Tarifa de ISR</div>
<div class="a" style="left:803px;top:372px;width:5px;height:1px;background:#3a3a3a;"></div>
<div class="a" style="left:803px;top:374px;width:5px;height:1px;background:#3a3a3a;"></div>
<div class="t" style="left:886.30px;top:366.69px;font-size:12.3px;line-height:14.14px;color:#2e2e2e;transform:scaleX(0.9399);transform-origin:0 0;">7.00</div>
<div class="t" style="left:193.00px;top:390.69px;font-size:12.3px;line-height:14.14px;color:#2e2e2e;transform:scaleX(0.8884);transform-origin:0 0;">1.4</div>
<div class="t" style="left:260.00px;top:390.69px;font-size:12.3px;line-height:14.14px;color:#2e2e2e;transform:scaleX(0.9571);transform-origin:0 0;">Días Tarifa de Subs</div>
<div class="a" style="left:803px;top:396px;width:5px;height:1px;background:#3a3a3a;"></div>
<div class="a" style="left:803px;top:398px;width:5px;height:1px;background:#3a3a3a;"></div>
<div class="t" style="left:886.30px;top:390.69px;font-size:12.3px;line-height:14.14px;color:#2e2e2e;transform:scaleX(0.9399);transform-origin:0 0;">7.00</div>
<div class="t" style="left:193.00px;top:414.69px;font-size:12.3px;line-height:14.14px;color:#2e2e2e;transform:scaleX(0.8884);transform-origin:0 0;">1.5</div>
<div class="t" style="left:260.00px;top:414.69px;font-size:12.3px;line-height:14.14px;color:#2e2e2e;transform:scaleX(0.9585);transform-origin:0 0;">Base para cálculo de ISR</div>
<div class="a" style="left:803px;top:420px;width:5px;height:1px;background:#3a3a3a;"></div>
<div class="a" style="left:803px;top:422px;width:5px;height:1px;background:#3a3a3a;"></div>
<div class="t" style="left:886.30px;top:414.69px;font-size:12.3px;line-height:14.14px;color:#2e2e2e;transform:scaleX(0.9441);transform-origin:0 0;">8,208.00</div>
<div class="t" style="left:193.00px;top:439.69px;font-size:12.3px;line-height:14.14px;color:#2e2e2e;transform:scaleX(0.8884);transform-origin:0 0;">1.6</div>
<div class="t" style="left:260.00px;top:439.69px;font-size:12.3px;line-height:14.14px;color:#2e2e2e;transform:scaleX(0.9671);transform-origin:0 0;">Base para cálculo de Subsidio</div>
<div class="a" style="left:803px;top:444px;width:5px;height:1px;background:#3a3a3a;"></div>
<div class="a" style="left:803px;top:446px;width:5px;height:1px;background:#3a3a3a;"></div>
<div class="t" style="left:886.30px;top:439.69px;font-size:12.3px;line-height:14.14px;color:#2e2e2e;transform:scaleX(0.9441);transform-origin:0 0;">8,208.00</div>
<div class="a" style="left:170px;top:465px;width:11px;height:11px;border:1px solid #9aa3ad;border-radius:2.5px;background:linear-gradient(#fff,#d9dde2)"><div class="a" style="left:2px;top:4px;width:5px;height:1px;background:#333"></div></div>
<div class="t" style="left:193.60px;top:463.96px;font-size:12px;line-height:13.8px;color:#3f78c6;font-weight:bold;">2</div>
<div class="t" style="left:260.00px;top:463.43px;font-size:11.5px;line-height:13.22px;color:#3f78c6;font-weight:bold;letter-spacing:-0.106px;">CÁLCULO DEL ISR DIRECTO DEL PERIODO</div>
<div class="t" style="left:193.00px;top:487.69px;font-size:12.3px;line-height:14.14px;color:#2e2e2e;transform:scaleX(0.8884);transform-origin:0 0;">2.1</div>
<div class="t" style="left:260.00px;top:487.69px;font-size:12.3px;line-height:14.14px;color:#2e2e2e;transform:scaleX(0.9396);transform-origin:0 0;">Límite inferior</div>
<div class="a" style="left:803px;top:493px;width:5px;height:1px;background:#3a3a3a;"></div>
<div class="a" style="left:803px;top:495px;width:5px;height:1px;background:#3a3a3a;"></div>
<div class="t" style="left:886.30px;top:487.69px;font-size:12.3px;line-height:14.14px;color:#2e2e2e;transform:scaleX(0.9441);transform-origin:0 0;">6,332.06</div>
<div class="t" style="left:193.00px;top:511.69px;font-size:12.3px;line-height:14.14px;color:#2e2e2e;transform:scaleX(0.8884);transform-origin:0 0;">2.2</div>
<div class="t" style="left:260.00px;top:511.69px;font-size:12.3px;line-height:14.14px;color:#2e2e2e;transform:scaleX(0.9671);transform-origin:0 0;">Base gravada menos límite inferior</div>
<div class="a" style="left:803px;top:517px;width:5px;height:1px;background:#3a3a3a;"></div>
<div class="a" style="left:803px;top:519px;width:5px;height:1px;background:#3a3a3a;"></div>
<div class="t" style="left:886.30px;top:511.69px;font-size:12.3px;line-height:14.14px;color:#2e2e2e;transform:scaleX(0.9441);transform-origin:0 0;">1,875.94</div>
<div class="t" style="left:193.00px;top:535.69px;font-size:12.3px;line-height:14.14px;color:#2e2e2e;transform:scaleX(0.8884);transform-origin:0 0;">2.3</div>
<div class="t" style="left:260.00px;top:535.69px;font-size:12.3px;line-height:14.14px;color:#2e2e2e;transform:scaleX(0.9473);transform-origin:0 0;">Porcentaje</div>
<div class="a" style="left:803px;top:541px;width:5px;height:1px;background:#3a3a3a;"></div>
<div class="a" style="left:803px;top:543px;width:5px;height:1px;background:#3a3a3a;"></div>
<div class="t" style="left:886.30px;top:535.69px;font-size:12.3px;line-height:14.14px;color:#2e2e2e;transform:scaleX(0.9468);transform-origin:0 0;">10.88%</div>
<div class="t" style="left:193.00px;top:559.69px;font-size:12.3px;line-height:14.14px;color:#2e2e2e;transform:scaleX(0.8884);transform-origin:0 0;">2.4</div>
<div class="t" style="left:260.00px;top:559.69px;font-size:12.3px;line-height:14.14px;color:#2e2e2e;transform:scaleX(0.9564);transform-origin:0 0;">Por porcentaje</div>
<div class="a" style="left:803px;top:565px;width:5px;height:1px;background:#3a3a3a;"></div>
<div class="a" style="left:803px;top:567px;width:5px;height:1px;background:#3a3a3a;"></div>
<div class="t" style="left:886.30px;top:559.69px;font-size:12.3px;line-height:14.14px;color:#2e2e2e;transform:scaleX(0.9435);transform-origin:0 0;">204.10</div>
<div class="t" style="left:193.00px;top:583.69px;font-size:12.3px;line-height:14.14px;color:#2e2e2e;transform:scaleX(0.8884);transform-origin:0 0;">2.5</div>
<div class="t" style="left:260.00px;top:583.69px;font-size:12.3px;line-height:14.14px;color:#2e2e2e;transform:scaleX(0.9432);transform-origin:0 0;">Cuota fija</div>
<div class="a" style="left:803px;top:589px;width:5px;height:1px;background:#3a3a3a;"></div>
<div class="a" style="left:803px;top:591px;width:5px;height:1px;background:#3a3a3a;"></div>
<div class="t" style="left:886.30px;top:583.69px;font-size:12.3px;line-height:14.14px;color:#2e2e2e;transform:scaleX(0.9435);transform-origin:0 0;">371.83</div>
<div class="t" style="left:193.00px;top:608.69px;font-size:12.3px;line-height:14.14px;color:#2e2e2e;transform:scaleX(0.8884);transform-origin:0 0;">2.6</div>
<div class="t" style="left:260.00px;top:608.69px;font-size:12.3px;line-height:14.14px;color:#2e2e2e;transform:scaleX(0.9486);transform-origin:0 0;">ISR directo elevado al mes</div>
<div class="a" style="left:803px;top:614px;width:5px;height:1px;background:#3a3a3a;"></div>
<div class="a" style="left:803px;top:616px;width:5px;height:1px;background:#3a3a3a;"></div>
<div class="t" style="left:886.30px;top:608.69px;font-size:12.3px;line-height:14.14px;color:#2e2e2e;transform:scaleX(0.9435);transform-origin:0 0;">575.93</div>
<div class="t" style="left:193.00px;top:632.96px;font-size:12px;line-height:13.8px;color:#111;font-weight:bold;transform:scaleX(0.9588);transform-origin:0 0;">2.7</div>
<div class="t" style="left:260.00px;top:632.96px;font-size:12px;line-height:13.8px;color:#111;font-weight:bold;transform:scaleX(1.0467);transform-origin:0 0;">ISR directo del periodo</div>
<div class="a" style="left:803px;top:638px;width:5px;height:1px;background:#3a3a3a;"></div>
<div class="a" style="left:803px;top:640px;width:5px;height:1px;background:#3a3a3a;"></div>
<div class="t" style="left:886.30px;top:632.96px;font-size:12px;line-height:13.8px;color:#111;font-weight:bold;transform:scaleX(0.9945);transform-origin:0 0;">132.62</div>
<div class="a" style="left:170px;top:658px;width:11px;height:11px;border:1px solid #9aa3ad;border-radius:2.5px;background:linear-gradient(#fff,#d9dde2)"><div class="a" style="left:2px;top:4px;width:5px;height:1px;background:#333"></div></div>
<div class="t" style="left:193.60px;top:656.96px;font-size:12px;line-height:13.8px;color:#3f78c6;font-weight:bold;">3</div>
<div class="t" style="left:260.00px;top:657.43px;font-size:11.5px;line-height:13.22px;color:#3f78c6;font-weight:bold;letter-spacing:-0.109px;">CÁLCULO DEL SUBSIDIO CAUSADO DEL PERIODO VIGENTE</div>
<div class="t" style="left:193.00px;top:680.69px;font-size:12.3px;line-height:14.14px;color:#2e2e2e;transform:scaleX(0.8884);transform-origin:0 0;">3.1</div>
<div class="t" style="left:260.00px;top:680.69px;font-size:12.3px;line-height:14.14px;color:#2e2e2e;transform:scaleX(0.9633);transform-origin:0 0;">Subsidio causado elevado al mes</div>
<div class="a" style="left:803px;top:686px;width:5px;height:1px;background:#3a3a3a;"></div>
<div class="a" style="left:803px;top:688px;width:5px;height:1px;background:#3a3a3a;"></div>
<div class="t" style="left:886.30px;top:680.69px;font-size:12.3px;line-height:14.14px;color:#2e2e2e;transform:scaleX(0.9399);transform-origin:0 0;">0.00</div>
<div class="a" style="left:161.5px;top:700.3px;width:838.5px;height:1.8px;background:#8a8a8a;"></div>
<div class="a" style="left:161.5px;top:702.1px;width:838.5px;height:1px;background:#e6e6e6;"></div>
<div class="a" style="left:164.2px;top:711.4px;width:832.6px;height:66.2px;border:1px solid #bdbdbd;border-radius:2px;"></div>
<div class="a" style="left:172.5px;top:706px;width:76.2px;height:12px;background:#fff;"></div>
<div class="t" style="left:173.80px;top:706.04px;font-size:13px;line-height:14.95px;color:#3b8acb;font-weight:bold;letter-spacing:0.007px;">Descripción</div>
<div class="a" style="left:167px;top:722.8px;width:829px;height:53px;background:#fff;border:1px solid #d9d9d9;border-top:2px solid #6e6e6e;border-left:2px solid #8c8c8c;"></div>
<div class="a" style="left:976.3px;top:724.8px;width:18.5px;height:50px;background:#f0f0f0;"></div>
<svg style="left:979.5px;top:730.2px" width="10" height="7" viewBox="0 0 10 7"><path d="M0 7 L5 .4 L10 7Z" fill="#a6a6a6"/></svg>
<svg style="left:979.5px;top:762.2px" width="10" height="7" viewBox="0 0 10 7"><path d="M0 0 L5 6.6 L10 0Z" fill="#a6a6a6"/></svg>
<div class="a" style="left:165px;top:780px;width:832px;height:62px;background:#2574ae;"></div>
<div class="t" style="left:174.20px;top:781.03px;font-size:14.1px;line-height:16.21px;color:#f2f2f2;font-weight:bold;transform:scaleX(1.0032);transform-origin:0 0;">Notas:</div>
<div class="t" style="left:192.60px;top:800.04px;font-size:13px;line-height:14.95px;color:#f2f2f2;font-weight:bold;">*</div>
<div class="t" style="left:192.60px;top:821.04px;font-size:13px;line-height:14.95px;color:#f2f2f2;font-weight:bold;">*</div>
<div class="t" style="left:208.30px;top:799.03px;font-size:14.1px;line-height:16.21px;color:#f2f2f2;font-weight:bold;transform:scaleX(0.9820);transform-origin:0 0;">Los ajustes en subsidio sólo se calculan cuando el periodo sea fin de mes.</div>
<div class="t" style="left:208.30px;top:821.03px;font-size:14.1px;line-height:16.21px;color:#f2f2f2;font-weight:bold;transform:scaleX(1.0003);transform-origin:0 0;">Empleados con tipo de régimen distinto a &quot;02. Sueldos&quot;, el Subsidio causado y entregado será  igual a cero.</div>
<div class="a" style="left:429px;top:230.3px;width:306px;height:355.4px;background:#fff;border-radius:7px;box-shadow:0 14px 40px 7px rgba(0,0,0,.36),0 0 0 .6px #8e8e8e;overflow:hidden"><div class="a" style="left:0;top:0;width:306px;height:28.5px;background:#4a5257"></div></div>
<div class="t" style="left:433.50px;top:236.49px;font-size:13.6px;line-height:15.64px;color:#f2f2f2;transform:scaleX(0.8034);transform-origin:0 0;">SUBS</div>
<div class="t" style="left:467.25px;top:236.49px;font-size:13.6px;line-height:15.64px;color:#f2f2f2;transform:scaleX(0.8654);transform-origin:0 0;">AL</div>
<div class="t" style="left:486.40px;top:236.49px;font-size:13.6px;line-height:15.64px;color:#f2f2f2;transform:scaleX(0.8417);transform-origin:0 0;">EMPLEO</div>
<div class="t" style="left:538.50px;top:236.49px;font-size:13.6px;line-height:15.64px;color:#f2f2f2;transform:scaleX(0.8886);transform-origin:0 0;">MENSUAL</div>
<svg style="left:710.3px;top:239.6px" width="11" height="11" viewBox="0 0 11 11"><path d="M0.5 0.5 L10.5 10.5 M10.5 0.5 L0.5 10.5" stroke="#f0f0f0" stroke-width="1.1" fill="none"/></svg>
<svg style="left:434px;top:267.5px" width="296" height="316" viewBox="0 0 296 316">
<defs>
<linearGradient id="sn" x1="0" y1="0" x2="0" y2="1"><stop offset="0" stop-color="#f6f58b"/><stop offset=".5" stop-color="#f6f58e"/><stop offset=".85" stop-color="#f8f89f"/><stop offset="1" stop-color="#f5f490"/></linearGradient>
<radialGradient id="sl" cx="0.13" cy="0.80" r="0.62" gradientTransform="scale(1 1)"><stop offset="0" stop-color="#fefee0" stop-opacity=".95"/><stop offset=".45" stop-color="#fdfdd0" stop-opacity=".6"/><stop offset="1" stop-color="#fdfdd0" stop-opacity="0"/></radialGradient>
<filter id="bl" x="-10%" y="-50%" width="120%" height="200%"><feGaussianBlur stdDeviation="1.8"/></filter>
</defs>
<path d="M6 301 L250 300 Q272 297 282 286 L274 301 Q250 311 190 311 L6 307Z" fill="#6d6d45" opacity=".62" filter="url(#bl)"/>
<path d="M0 0 H295.5 V236 Q296 282 262 297 Q240 304 200 304 L0 303.5Z" fill="url(#sn)"/>
<path d="M0 60 H260 V303.5 H0Z" fill="url(#sl)"/>
<path d="M295.5 196 V236 Q296 282 262 297 Q289 268 284 212Z" fill="#fcfcc8" opacity=".75"/>
</svg>
<svg style="left:556px;top:265px" width="30" height="34" viewBox="0 0 30 34"><defs><filter id="pb" x="-20%" y="-20%" width="140%" height="140%"><feGaussianBlur stdDeviation=".55"/></filter></defs>
<g filter="url(#pb)"><path d="M9.0 14.0 L12.5 18.0 L17.0 22.5 L22.0 24.8 L25.3 22.5 L24.6 27.0 L20.5 29.8 L15.5 29.8 L13.6 26.0 L12.3 21.0 L9.2 17.0Z" fill="#e85a44"/><path d="M6.0 3.0 L9.5 2.3 L12.6 3.4 L13.6 7.0 L13.2 11.5 L10.5 15.0 L6.0 15.2 L3.4 13.0 L3.0 8.5 L4.0 5.0Z" fill="#ea7d6a"/><path d="M11.2 4.5 L13.6 8.0 L14.0 11.5 L17.0 14.3 L22.5 14.8 L25.0 17.5 L25.3 22.5 L22.0 24.8 L17.0 22.5 L12.5 18.0 L10.2 13.0 L10.2 8.0Z" fill="#de1406"/>
<path d="M23.4 28.2 L25.2 30.2" stroke="#161616" stroke-width="1.6" stroke-linecap="round"/></g></svg>
<div class="t" style="left:638.30px;top:273.67px;font-size:13.4px;line-height:15.41px;color:#9c9c8c;transform:scaleX(0.8327);transform-origin:0 0;"><u>C</u>errar &lt;Esc&gt;</div>
<div class="a" style="left:456.4px;top:297px;width:244.5px;height:245.5px;background:#fff;border:1px solid #8fb0d6;border-top:1.6px solid #9db6d8;"></div>
<div class="a" style="left:457.4px;top:298.4px;width:222.8px;height:23.8px;background:linear-gradient(#fff 40%,#efefef 100%);border-bottom:1.5px solid #9a9a9a;"></div>
<div class="a" style="left:680.3px;top:298px;width:19.7px;height:243px;background:#f0f0f0;border-left:1px solid #cfcfcf;"></div>
<div class="a" style="left:690px;top:317px;width:1.7px;height:18.5px;background:#7d7d7d;"></div>
<div class="a" style="left:527.8px;top:298px;width:1px;height:243px;background:#c4c4c4;"></div>
<div class="t" style="left:461.20px;top:302.50px;font-size:12.5px;line-height:14.37px;color:#111;font-weight:bold;letter-spacing:0.115px;">Limite</div>
<div class="t" style="left:532.50px;top:302.50px;font-size:12.5px;line-height:14.37px;color:#111;font-weight:bold;letter-spacing:-0.012px;">Cuota Subsidio</div>
<div class="a" style="left:457.4px;top:322.7px;width:70.6px;height:23px;background:#b6c9ea;border:1px dotted #333;"></div>
<div class="t" style="left:459.60px;top:327.78px;font-size:12.2px;line-height:14.03px;color:#1a1a1a;letter-spacing:0.191px;">0.01</div>
<div class="t" style="left:532.50px;top:327.78px;font-size:12.2px;line-height:14.03px;color:#1a1a1a;letter-spacing:0.036px;">407.02</div>
<div class="a" style="left:457.4px;top:346.0px;width:222.8px;height:1px;background:#c9c9c9;"></div>
<div class="t" style="left:461.20px;top:351.78px;font-size:12.2px;line-height:14.03px;color:#1a1a1a;letter-spacing:0.006px;">1,768.97</div>
<div class="t" style="left:532.50px;top:351.78px;font-size:12.2px;line-height:14.03px;color:#1a1a1a;letter-spacing:0.036px;">406.83</div>
<div class="a" style="left:457.4px;top:370.2px;width:222.8px;height:1px;background:#c9c9c9;"></div>
<div class="t" style="left:461.20px;top:375.78px;font-size:12.2px;line-height:14.03px;color:#1a1a1a;letter-spacing:0.006px;">2,653.39</div>
<div class="t" style="left:532.50px;top:375.78px;font-size:12.2px;line-height:14.03px;color:#1a1a1a;letter-spacing:0.036px;">406.62</div>
<div class="a" style="left:457.4px;top:394.3px;width:222.8px;height:1px;background:#c9c9c9;"></div>
<div class="t" style="left:461.20px;top:399.78px;font-size:12.2px;line-height:14.03px;color:#1a1a1a;letter-spacing:0.006px;">3,472.85</div>
<div class="t" style="left:532.50px;top:399.78px;font-size:12.2px;line-height:14.03px;color:#1a1a1a;letter-spacing:0.036px;">392.77</div>
<div class="a" style="left:457.4px;top:418.5px;width:222.8px;height:1px;background:#c9c9c9;"></div>
<div class="t" style="left:461.20px;top:423.78px;font-size:12.2px;line-height:14.03px;color:#1a1a1a;letter-spacing:0.006px;">3,537.88</div>
<div class="t" style="left:532.50px;top:423.78px;font-size:12.2px;line-height:14.03px;color:#1a1a1a;letter-spacing:0.036px;">382.46</div>
<div class="a" style="left:457.4px;top:442.6px;width:222.8px;height:1px;background:#c9c9c9;"></div>
<div class="t" style="left:461.20px;top:447.78px;font-size:12.2px;line-height:14.03px;color:#1a1a1a;letter-spacing:0.006px;">4,446.16</div>
<div class="t" style="left:532.50px;top:447.78px;font-size:12.2px;line-height:14.03px;color:#1a1a1a;letter-spacing:0.036px;">354.23</div>
<div class="a" style="left:457.4px;top:466.8px;width:222.8px;height:1px;background:#c9c9c9;"></div>
<div class="t" style="left:461.20px;top:472.78px;font-size:12.2px;line-height:14.03px;color:#1a1a1a;letter-spacing:0.006px;">4,717.19</div>
<div class="t" style="left:532.50px;top:472.78px;font-size:12.2px;line-height:14.03px;color:#1a1a1a;letter-spacing:0.036px;">324.87</div>
<div class="a" style="left:457.4px;top:491.0px;width:222.8px;height:1px;background:#c9c9c9;"></div>
<div class="t" style="left:461.20px;top:496.78px;font-size:12.2px;line-height:14.03px;color:#1a1a1a;letter-spacing:0.006px;">5,335.43</div>
<div class="t" style="left:532.50px;top:496.78px;font-size:12.2px;line-height:14.03px;color:#1a1a1a;letter-spacing:0.036px;">294.63</div>
<div class="a" style="left:457.4px;top:515.1px;width:222.8px;height:1px;background:#c9c9c9;"></div>
<div class="t" style="left:461.20px;top:520.78px;font-size:12.2px;line-height:14.03px;color:#1a1a1a;letter-spacing:0.006px;">6,224.68</div>
<div class="t" style="left:532.50px;top:520.78px;font-size:12.2px;line-height:14.03px;color:#1a1a1a;letter-spacing:0.036px;">253.54</div>
<svg style="left:0;top:0" width="0" height="0"><defs><filter id="ds" x="-20%" y="-20%" width="150%" height="150%"><feGaussianBlur in="SourceAlpha" stdDeviation="1.3"/><feOffset dx="2" dy="2.2"/><feComponentTransfer><feFuncA type="linear" slope=".62"/></feComponentTransfer><feMerge><feMergeNode/><feMergeNode in="SourceGraphic"/></feMerge></filter></defs></svg>
<svg style="left:25px;top:-1px" width="129.0" height="51.5"><rect x="9.5" y="9.5" width="106.00" height="28.50" fill="none" stroke="#0a3576" stroke-width="3" stroke-dasharray="6.456 4.304" stroke-dashoffset="3.23" filter="url(#ds)"/></svg>
<svg style="left:497.4px;top:65px" width="68.4" height="71.9"><rect x="9.5" y="9.5" width="45.40" height="48.90" fill="none" stroke="#0a3576" stroke-width="3" stroke-dasharray="6.656 4.438" stroke-dashoffset="3.33" filter="url(#ds)"/></svg>
<svg style="left:151px;top:116.9px" width="227.2" height="52.1"><rect x="9.5" y="9.5" width="204.20" height="29.10" fill="none" stroke="#0a3576" stroke-width="3" stroke-dasharray="6.511 4.34" stroke-dashoffset="3.26" filter="url(#ds)"/></svg>
<svg style="left:281.9px;top:162px" width="151.3" height="57.9"><rect x="9.5" y="9.5" width="128.30" height="34.90" fill="none" stroke="#0a3576" stroke-width="3" stroke-dasharray="6.528 4.352" stroke-dashoffset="3.26" filter="url(#ds)"/></svg>
<svg style="left:417.9px;top:216.6px" width="332.7" height="385.4"><rect x="9.5" y="9.5" width="309.70" height="362.40" fill="none" stroke="#0a3576" stroke-width="3" stroke-dasharray="6.504 4.336" stroke-dashoffset="3.25" filter="url(#ds)"/></svg>
</body></html>
